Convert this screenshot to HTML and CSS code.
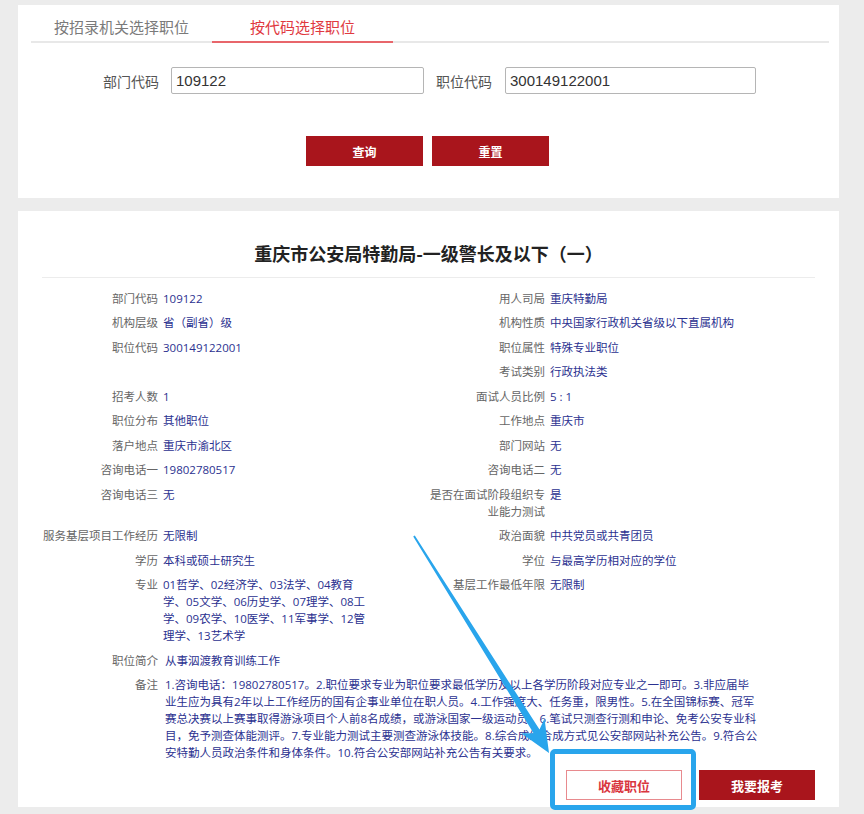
FILE: index.html
```html
<!DOCTYPE html>
<html lang="zh-CN">
  <head>
    <meta charset="utf-8" />
    <meta name="viewport" content="width=device-width, initial-scale=1" />
    <title>职位查询</title>
    <link rel="stylesheet" href="styles.css">
  </head>

  <body>
    <div class="page">
      <div class="card search">
        <div class="tabs">
          <div class="tab">按招录机关选择职位</div>
          <div class="tab active">按代码选择职位</div>
        </div>

        <div class="form-row">
          <label class="field-label">部门代码</label>
          <input class="field" type="text" value="109122" />
          <label class="field-label second">职位代码</label>
          <input class="field narrow" type="text" value="300149122001" />
        </div>

        <div class="actions">
          <button class="btn">查询</button>
          <button class="btn">重置</button>
        </div>
      </div>

      <div class="card detail">
        <h2 class="title">重庆市公安局特勤局-一级警长及以下（一）</h2>

        <div class="grid">
          <div class="item"><span class="k">部门代码</span><span class="v">109122</span></div>
          <div class="item"><span class="k">用人司局</span><span class="v">重庆特勤局</span></div>
          <div class="item"><span class="k">机构层级</span><span class="v">省（副省）级</span></div>
          <div class="item"><span class="k">机构性质</span><span class="v">中央国家行政机关省级以下直属机构</span></div>
          <div class="item"><span class="k">职位代码</span><span class="v">300149122001</span></div>
          <div class="item"><span class="k">职位属性</span><span class="v">特殊专业职位</span></div>
          <div class="item"><span class="k"></span><span class="v"></span></div>
          <div class="item"><span class="k">考试类别</span><span class="v">行政执法类</span></div>
          <div class="item"><span class="k">招考人数</span><span class="v">1</span></div>
          <div class="item"><span class="k">面试人员比例</span><span class="v">5 : 1</span></div>
          <div class="item"><span class="k">职位分布</span><span class="v">其他职位</span></div>
          <div class="item"><span class="k">工作地点</span><span class="v">重庆市</span></div>
          <div class="item"><span class="k">落户地点</span><span class="v">重庆市渝北区</span></div>
          <div class="item"><span class="k">部门网站</span><span class="v">无</span></div>
          <div class="item"><span class="k">咨询电话一</span><span class="v">19802780517</span></div>
          <div class="item"><span class="k">咨询电话二</span><span class="v">无</span></div>
          <div class="item"><span class="k">咨询电话三</span><span class="v">无</span></div>
          <div class="item"><span class="k">是否在面试阶段组织专业能力测试</span><span class="v">是</span></div>
          <div class="item"><span class="k">服务基层项目工作经历</span><span class="v">无限制</span></div>
          <div class="item"><span class="k">政治面貌</span><span class="v">中共党员或共青团员</span></div>
          <div class="item"><span class="k">学历</span><span class="v">本科或硕士研究生</span></div>
          <div class="item"><span class="k">学位</span><span class="v">与最高学历相对应的学位</span></div>
          <div class="item"><span class="k">专业</span><span class="v">01哲学、02经济学、03法学、04教育学、05文学、06历史学、07理学、08工学、09农学、10医学、11军事学、12管理学、13艺术学</span></div>
          <div class="item"><span class="k">基层工作最低年限</span><span class="v">无限制</span></div>
        </div>

        <div class="item wide"><span class="k">职位简介</span><span class="v">从事泅渡教育训练工作</span></div>
        <div class="item wide"><span class="k">备注</span><span class="v">1.咨询电话：19802780517。2.职位要求专业为职位要求最低学历及以上各学历阶段对应专业之一即可。3.非应届毕业生应为具有2年以上工作经历的国有企事业单位在职人员。4.工作强度大、任务重，限男性。5.在全国锦标赛、冠军赛总决赛以上赛事取得游泳项目个人前8名成绩，或游泳国家一级运动员。6.笔试只测查行测和申论、免考公安专业科目，免予测查体能测评。7.专业能力测试主要测查游泳体技能。8.综合成绩合成方式见公安部网站补充公告。9.符合公安特勤人员政治条件和身体条件。10.符合公安部网站补充公告有关要求。</span></div>

        <div class="bottom">
          <span class="collect">
            <button class="btn ghost">收藏职位</button>
            <span class="highlight"></span>
          </span>
          <button class="btn">我要报考</button>
        </div>
      </div>
    </div>

    <!-- annotation arrow -->
    <svg class="arrow" width="864" height="814" viewBox="0 0 864 814">
      <polygon points="414.8,535.5 539.5,729.6 544.5,718.4 549,753 521.3,733.2 533.6,733.3 413.2,536.5" fill="#29a5ec" />
    </svg>
  </body>
</html>
```

FILE: styles.css
```css
body {
  margin: 0;
  background-color: #ececec;
  font-family: "Noto Sans CJK SC", "Noto Sans", sans-serif;
  color: #333;
}

.page {
  width: 821px;
  padding: 5px 0 7px 18px;
}

.card {
  background: #ffffff;
  box-sizing: border-box;
}

/* search card */
.search {
  padding: 0 10px 32px 13px;
}

.tabs {
  display: flex;
  padding-top: 12px;
  border-bottom: 2px solid #e8e8e8;
}

.tab {
  width: 181px;
  text-align: center;
  font-size: 15px;
  line-height: 20px;
  padding-bottom: 4px;
  color: #7a7a7a;
}

.tab.active {
  color: #e0393f;
  border-bottom: 2px solid #e8666b;
  margin-bottom: -2px;
}

.form-row {
  display: flex;
  align-items: center;
  margin-top: 24px;
  padding-left: 72px;
}

.field-label {
  font-size: 14px;
  color: #555;
  width: 56px;
  margin-right: 12px;
}

.field-label.second {
  margin-left: 12px;
  margin-right: 13px;
}

.field {
  box-sizing: border-box;
  width: 253px;
  height: 27px;
  border: 1px solid #b5b5b5;
  border-radius: 2px;
  padding: 0 4px;
  font-family: "Liberation Sans", Arial, sans-serif;
  font-size: 15px;
  color: #333;
}

.field.narrow {
  width: 251px;
}

.actions {
  display: flex;
  justify-content: center;
  gap: 9px;
  margin-top: 42px;
  padding-right: 5px;
}

.btn {
  width: 117px;
  height: 30px;
  border: none;
  background: #a9151c;
  color: #ffffff;
  font-family: "Noto Sans CJK SC", sans-serif;
  font-size: 12px;
  font-weight: bold;
  padding: 0;
}

/* detail card */
.detail {
  margin-top: 13px;
  padding: 30px 24px 7px;
}

.title {
  margin: 0;
  padding-bottom: 12px;
  border-bottom: 1px solid #ececec;
  font-size: 18px;
  line-height: 24px;
  font-weight: bold;
  text-align: center;
  color: #222;
}

.grid {
  display: grid;
  grid-template-columns: 387px 387px;
  margin-top: 8px;
}

.item {
  display: flex;
  align-items: flex-start;
  padding: 3.75px 0;
  font-family: "Open Sans", "Noto Sans CJK SC", sans-serif;
  font-size: 11.5px;
  line-height: 17px;
}

.k {
  flex-shrink: 0;
  width: 116px;
  text-align: right;
  color: #666;
}

.v {
  width: 206px;
  margin-left: 5px;
  color: #2b3190;
}

.item.wide .v {
  width: 595px;
  margin-left: 7px;
}

.bottom {
  display: flex;
  justify-content: flex-end;
  gap: 17px;
  margin-top: 5px;
}

.bottom .btn {
  width: 116px;
  font-size: 13px;
}

.collect {
  position: relative;
  display: flex;
}

.btn.ghost {
  background: #ffffff;
  border: 1px solid #e88a8e;
  color: #d9363e;
}

.highlight {
  position: absolute;
  left: -16px;
  right: -14px;
  top: -21px;
  bottom: -10px;
  border: 5px solid #29a5ec;
  border-radius: 5px;
}

.arrow {
  position: absolute;
  left: 0;
  top: 0;
  pointer-events: none;
}
```
